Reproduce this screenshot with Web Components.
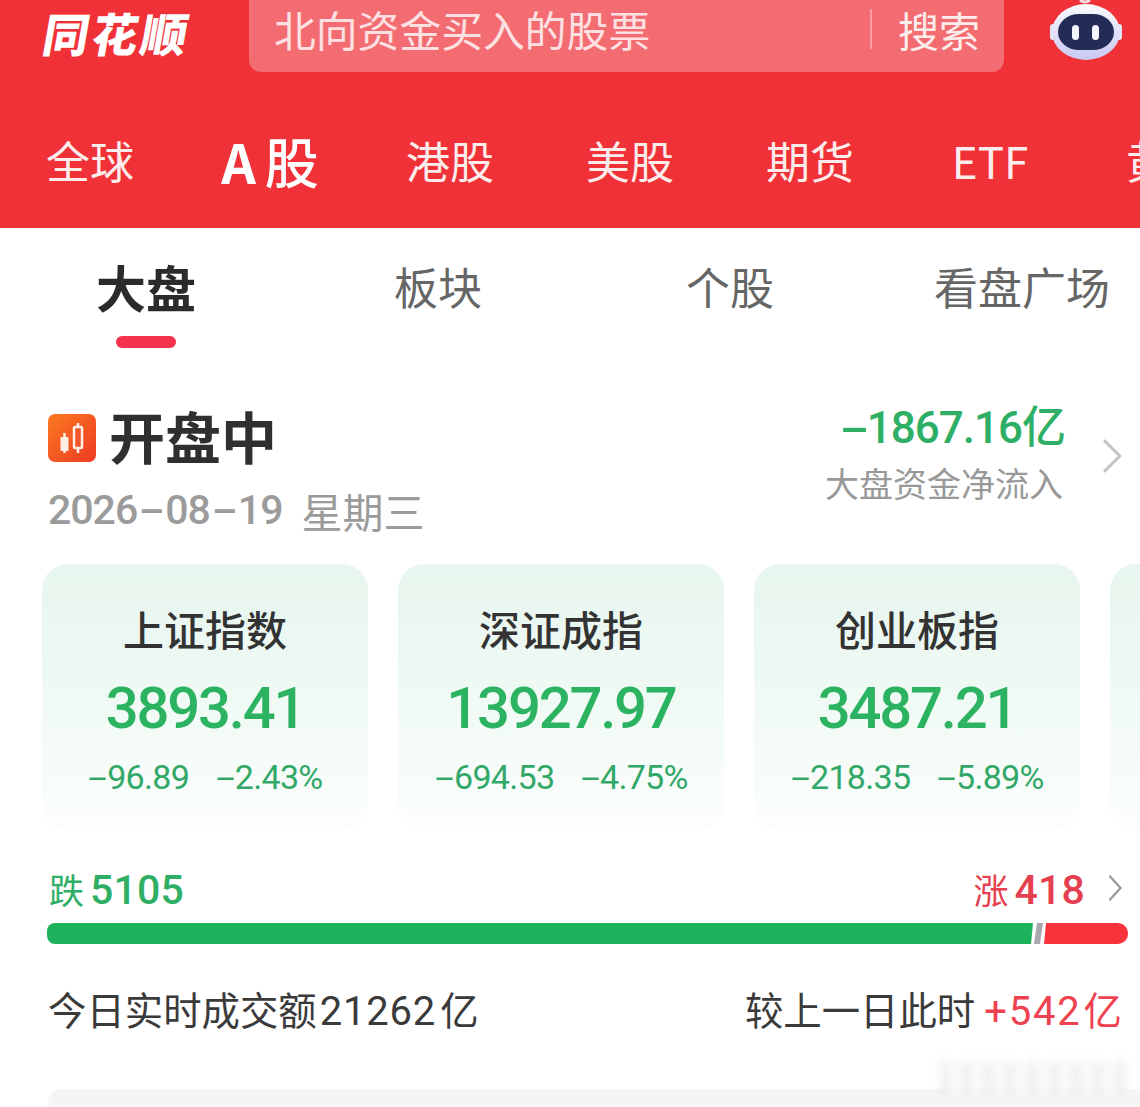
<!DOCTYPE html>
<html lang="zh">
<head>
<meta charset="utf-8">
<style>
    html, body { margin: 0; background: #fff; }
    body {
        width: 1140px;
        height: 1107px;
        overflow: hidden;
        font-family: "Noto Sans CJK SC", "Noto Sans", sans-serif;
    }
</style>
</head>
<body>
<market-header>
    <market-tab>全球</market-tab>
    <market-tab active><span>A</span>股</market-tab>
    <market-tab>港股</market-tab>
    <market-tab>美股</market-tab>
    <market-tab>期货</market-tab>
    <market-tab>ETF</market-tab>
    <market-tab>黄金</market-tab>
</market-header>
<sub-tabs></sub-tabs>
<market-panel>
    <index-card name="上证指数" value="3893.41" change="-96.89" percent="-2.43%"></index-card>
    <index-card name="深证成指" value="13927.97" change="-694.53" percent="-4.75%"></index-card>
    <index-card name="创业板指" value="3487.21" change="-218.35" percent="-5.89%"></index-card>
    <index-card></index-card>
</market-panel>
<breadth-bar down="5105" up="418"></breadth-bar>
<turnover-row total="21262" diff="+542"></turnover-row>
<bottom-strip></bottom-strip>

<script>
const NUM = '"Roboto", "Noto Sans CJK SC", sans-serif';
const GREEN = '#2bb362';
const CHEVRON = (w, h, color) => `<svg width="${w}" height="${h}" viewBox="0 0 20 32" preserveAspectRatio="none" fill="none"><path d="M2 2 L18 16 L2 30" stroke="${color}" stroke-width="2.8"/></svg>`;
// the app draws its minus sign much longer than a hyphen
const DASH = s => s.replace(/-/g, '<i class="m">-</i>');
const DASH_CSS = `.m { display: inline-block; font-style: normal; width: .58em; text-align: center; transform: scaleX(2); transform-origin: center; }`;

class MarketTab extends HTMLElement {
    constructor() {
        super();
        this.attachShadow({mode: 'open'}).innerHTML = `
<style>
    :host {
        flex: 0 0 180px;
        display: flex;
        align-items: center;
        justify-content: center;
        color: #fdecec;
        font-size: 44px;
        white-space: nowrap;
    }
    :host([active]) {
        color: #fff;
        font-size: 54px;
        font-weight: 500;
    }
    ::slotted(span) { font-weight: 700; margin-right: 9px; }
</style>
<slot></slot>`;
    }
}
customElements.define('market-tab', MarketTab);

class MarketHeader extends HTMLElement {
    constructor() {
        super();
        this.attachShadow({mode: 'open'}).innerHTML = `
<style>
    :host { display: block; height: 228px; background: #f03137; overflow: hidden; }
    .top { display: flex; height: 72px; }
    .logo {
        width: 249px;
        box-sizing: border-box;
        padding: 0 0 8px 44px;
        display: flex;
        align-items: center;
        color: #fff;
        font-size: 46px;
        line-height: 50px;
        font-weight: 900;
        letter-spacing: 3px;
    }
    .logo span { display: block; transform: skewX(-10deg); }
    .search {
        width: 755px;
        height: 72px;
        box-sizing: border-box;
        background: #f36c72;
        border-radius: 0 0 12px 12px;
        display: flex;
        align-items: center;
        padding: 0 24px 14px 25px;
        color: #fde0e1;
        font-size: 41.800px;
        line-height: 44px;
    }
    .hint { flex: 1; }
    .go { border-left: 2px solid #f79ea1; padding-left: 26px; line-height: 40px; color: #fdecec; font-size: 41px; }
    .robot { flex: 1; display: flex; justify-content: flex-start; padding-left: 44px; }
    .tabs { display: flex; height: 156px; padding-top: 20px; box-sizing: border-box; }
</style>
<div class="top">
    <div class="logo"><span>同花顺</span></div>
    <div class="search"><div class="hint">北向资金买入的股票</div><div class="go">搜索</div></div>
    <div class="robot">
        <svg width="76" height="62" viewBox="0 0 76 62">
            <defs><linearGradient id="rb" x1="0" y1="0" x2="0" y2="1"><stop offset="0" stop-color="#fbfbff"/><stop offset="1" stop-color="#c9c8f2"/></linearGradient></defs>
            <path d="M32 0 q5 4 10 0" stroke="#f7d9e0" stroke-width="3" fill="none"/>
            <rect x="2" y="24" width="6" height="16" rx="3" fill="#e6e4fa"/>
            <rect x="68" y="24" width="6" height="16" rx="3" fill="#e6e4fa"/>
            <ellipse cx="38" cy="32" rx="34" ry="28" fill="url(#rb)"/>
            <rect x="10" y="14" width="56" height="36" rx="21" fill="#232c55"/>
            <rect x="24" y="25" width="7" height="15" rx="3.500" fill="#f4f5ff"/>
            <rect x="44" y="25" width="7" height="15" rx="3.500" fill="#f4f5ff"/>
        </svg>
    </div>
</div>
<div class="tabs"><slot></slot></div>`;
    }
}
customElements.define('market-header', MarketHeader);

class SubTabs extends HTMLElement {
    constructor() {
        super();
        this.attachShadow({mode: 'open'}).innerHTML = `
<style>
    :host {
        display: flex;
        height: 121px;
        color: #666;
        font-size: 44px;
        background: #fff;
    }
    .t { flex: 0 0 292px; text-align: center; line-height: 62px; padding-top: 27px; white-space: nowrap; }
    .on { color: #2b2b2b; font-size: 50px; font-weight: 700; }
    .on::after { content: ""; display: block; width: 60px; height: 12px; margin: 19px auto 0; background: #f5334e; border-radius: 6px; }
</style>
<div class="t on">大盘</div><div class="t">板块</div><div class="t">个股</div><div class="t">看盘广场</div>`;
    }
}
customElements.define('sub-tabs', SubTabs);

class IndexCard extends HTMLElement {
    constructor() {
        super();
        const a = n => this.getAttribute(n) || '';
        const name = a('name');
        this.attachShadow({mode: 'open'}).innerHTML = `
<style>
    :host {
        flex: 0 0 326px;
        height: 266px;
        box-sizing: border-box;
        display: flex;
        flex-direction: column;
        align-items: center;
        border-radius: 26px;
        background: linear-gradient(180deg, #e7f6ee 0%, #f1faf5 55%, #fcfefd 100%);
        padding-top: 35px;
    }
    .n { font-size: 41px; font-weight: 500; line-height: 58px; color: #333; }
    .v { font-family: ${NUM}; font-size: 58px; font-weight: 500; line-height: 62px; margin-top: 20px; color: ${GREEN}; letter-spacing: -2.2px; }
    .c { display: flex; gap: 26px; font-family: ${NUM}; font-size: 34px; line-height: 40px; margin-top: 18px; color: #31a868; letter-spacing: -.7px; }
    ${DASH_CSS}
</style>
${name ? `<div class="n">${name}</div><div class="v">${a('value')}</div><div class="c"><span>${DASH(a('change'))}</span><span>${DASH(a('percent'))}</span></div>` : ''}`;
    }
}
customElements.define('index-card', IndexCard);

class MarketPanel extends HTMLElement {
    constructor() {
        super();
        this.attachShadow({mode: 'open'}).innerHTML = `
<style>
    :host { display: block; height: 481px; box-sizing: border-box; overflow: hidden; }
    .head { display: flex; height: 215px; box-sizing: border-box; padding: 49px 0 0 48px; }
    .left { flex: 1; }
    .status { display: flex; align-items: center; gap: 13px; height: 82px; font-size: 56px; font-weight: 700; color: #2f2f2f; }
    .status span { line-height: 74px; margin-top: -8px; }
    .status svg { margin-top: -2px; }
    .date { display: flex; align-items: center; gap: 19px; height: 60px; color: #9b9b9b; font-size: 41px; }
    .date b { font-family: ${NUM}; font-weight: 500; font-size: 41px; letter-spacing: -1px; }
    .date .m { width: 28px; transform: scaleX(1.9); }
    .flow { width: 240px; text-align: right; margin-top: 2px; }
    .amt { font-family: ${NUM}; font-weight: 500; font-size: 44px; line-height: 56px; color: #2eaf65; letter-spacing: -1px; white-space: nowrap; }
    .lbl { font-size: 34px; line-height: 50px; color: #999; margin-top: 2px; padding-right: 3px; white-space: nowrap; }
    .more { width: 75px; padding: 40px 0 0 37px; box-sizing: border-box; }
    .cards { display: flex; gap: 30px; padding-left: 42px; }
    ${DASH_CSS}
</style>
<div class="head">
    <div class="left">
        <div class="status">
            <svg width="48" height="48" viewBox="0 0 48 48">
                <defs><linearGradient id="cd" x1="0" y1="0" x2="1" y2="1"><stop offset="0" stop-color="#fb7a1e"/><stop offset="1" stop-color="#ee3a25"/></linearGradient></defs>
                <rect width="48" height="48" rx="7" fill="url(#cd)"/>
                <path d="M16.500 19v20M30 9v30" stroke="#fff0e6" stroke-width="2.500"/>
                <rect x="12.500" y="23" width="8" height="14" rx="1" fill="#fff0e6"/>
                <rect x="26" y="13" width="8" height="21" rx="1" fill="#f2552a" stroke="#fff0e6" stroke-width="2.500"/>
            </svg>
            <span>开盘中</span>
        </div>
        <div class="date"><b>${DASH('2026-08-19')}</b><span>星期三</span></div>
    </div>
    <div class="flow"><div class="amt">${DASH('-1867.16')}亿</div><div class="lbl">大盘资金净流入</div></div>
    <div class="more">${CHEVRON(20, 36, '#c4c4c4')}</div>
</div>
<div class="cards"><slot></slot></div>`;
    }
}
customElements.define('market-panel', MarketPanel);

class BreadthBar extends HTMLElement {
    constructor() {
        super();
        this.attachShadow({mode: 'open'}).innerHTML = `
<style>
    :host { display: block; padding: 33px 12px 0 47px; }
    .row { display: flex; align-items: center; height: 50px; font-size: 35px; margin: 0 6px 0 2px; }
    .row b { font-family: ${NUM}; font-weight: 500; font-size: 41px; letter-spacing: .2px; margin-left: 6px; }
    .down { color: #2eaf65; flex: 1; }
    .up { color: #e5404f; }
    .row svg { margin-left: 23px; }
    .bar { display: flex; height: 21px; margin-top: 10px; }
    .g { flex: 1; background: #1fb25d; border-radius: 8px 0 0 8px; clip-path: polygon(0 0, calc(100% - 1px) 0, calc(100% - 3px) 100%, 0 100%); }
    .s { width: 9px; background: #a9a9ad; clip-path: polygon(3px 0, 100% 0, 6px 100%, 0 100%); }
    .r { width: 84px; margin-left: 1px; background: #f9333b; border-radius: 0 10px 10px 0; clip-path: polygon(2px 0, 100% 0, 100% 100%, 0 100%); }
</style>
<div class="row">
    <span class="down">跌<b>${this.getAttribute('down')}</b></span>
    <span class="up">涨<b>${this.getAttribute('up')}</b></span>
    ${CHEVRON(14, 28, '#999')}
</div>
<div class="bar"><div class="g"></div><div class="s"></div><div class="r"></div></div>`;
    }
}
customElements.define('breadth-bar', BreadthBar);

class TurnoverRow extends HTMLElement {
    constructor() {
        super();
        this.attachShadow({mode: 'open'}).innerHTML = `
<style>
    :host {
        display: flex;
        justify-content: space-between;
        align-items: center;
        height: 60px;
        margin-top: 34px;
        padding: 0 18px 0 48px;
        font-size: 38.400px;
        color: #3a3a3a;
    }
    b { font-family: ${NUM}; font-weight: 400; font-size: 40px; letter-spacing: .8px; margin: 0 4px 0 3px; }
    .red { color: #ef4250; margin-left: 9px; }
    .red b { margin: 0 2px 0 0; letter-spacing: 1.800px; }
</style>
<div>今日实时成交额<b>${this.getAttribute('total')}</b>亿</div>
<div>较上一日此时<span class="red"><b>${this.getAttribute('diff')}</b>亿</span></div>`;
    }
}
customElements.define('turnover-row', TurnoverRow);

class BottomStrip extends HTMLElement {
    constructor() {
        super();
        this.attachShadow({mode: 'open'}).innerHTML = `
<style>
    :host {
        display: block;
        position: relative;
        height: 40px;
        margin: 51px 0 0 48px;
        background: #f5f5f5;
        border-radius: 14px 0 0 0;
    }
    .mark {
        position: absolute;
        left: 892px;
        top: -28px;
        width: 190px;
        height: 34px;
        filter: blur(4px);
        background: repeating-linear-gradient(90deg, #e6e6e6 0 9px, #f8f8f8 9px 22px);
        opacity: .6;
    }
</style>
<div class="mark"></div>`;
    }
}
customElements.define('bottom-strip', BottomStrip);
</script>
</body>
</html>
